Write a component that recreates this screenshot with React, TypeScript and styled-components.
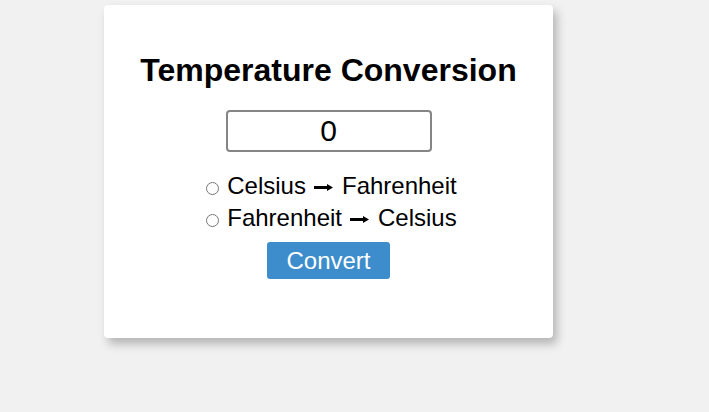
import { useState } from "react"
import styled, { createGlobalStyle } from "styled-components"

const GlobalStyle = createGlobalStyle`
  html, body {
    margin: 0;
    padding: 0;
    background: #f1f1f1;
    font-family: "Liberation Sans", Arial, sans-serif;
  }
`

const Styled = {
  Page: styled.div`
    width: 709px;
    height: 412px;
    padding: 5px 0 0 104px;
    box-sizing: border-box;
  `,
  Card: styled.div`
    width: 449px;
    height: 333px;
    box-sizing: border-box;
    padding: 47px 20px 0;
    background: #ffffff;
    border-radius: 4px;
    box-shadow: 4px 6px 10px rgba(0, 0, 0, 0.25);
    display: flex;
    flex-direction: column;
    align-items: center;
  `,
  Title: styled.h1`
    margin: 0;
    font-size: 32px;
    line-height: 37px;
    font-weight: 700;
    color: #000;
  `,
  Input: styled.input`
    margin-top: 21px;
    width: 206px;
    height: 42px;
    box-sizing: border-box;
    border: 2px solid #858585;
    border-radius: 4px;
    font-family: "Liberation Sans", Arial, sans-serif;
    font-size: 30px;
    text-align: center;
    color: #000;
    outline: none;
  `,
  Options: styled.div`
    margin-top: 18px;
    padding-left: 6px;
    display: flex;
    flex-direction: column;
    align-items: center;
  `,
  Option: styled.label`
    display: flex;
    align-items: center;
    gap: 8px;
    height: 32px;
    font-size: 24px;
    color: #000;
  `,
  Radio: styled.input`
    margin: 4px 0 0;
    width: 13px;
    height: 13px;
  `,
  Text: styled.span`
    display: inline-flex;
    align-items: center;
  `,
  Arrow: styled.svg`
    margin: 3px 9px 0 8px;
  `,
  Button: styled.button`
    margin-top: 8px;
    width: 123px;
    height: 37px;
    border: none;
    border-radius: 3px;
    background: #3d8ccb;
    color: #fff;
    font-family: "Liberation Sans", Arial, sans-serif;
    font-size: 24px;
    cursor: pointer;
  `,
}

const Arrow = () => (
  <Styled.Arrow width="19" height="7" viewBox="0 0 19 7">
    <rect x="0" y="2" width="14" height="3" fill="#000" />
    <path d="M13 0 L19 3.5 L13 7 Z" fill="#000" />
  </Styled.Arrow>
)

export default function App() {
  const [value, setValue] = useState("0")
  const [mode, setMode] = useState("")

  return (
    <>
      <GlobalStyle />
      <Styled.Page>
        <Styled.Card>
          <Styled.Title>Temperature Conversion</Styled.Title>
          <Styled.Input value={value} onChange={(e) => setValue(e.target.value)} />
          <Styled.Options>
            <Styled.Option>
              <Styled.Radio
                type="radio"
                name="mode"
                checked={mode === "cf"}
                onChange={() => setMode("cf")}
              />
              <Styled.Text>
                Celsius<Arrow />Fahrenheit
              </Styled.Text>
            </Styled.Option>
            <Styled.Option>
              <Styled.Radio
                type="radio"
                name="mode"
                checked={mode === "fc"}
                onChange={() => setMode("fc")}
              />
              <Styled.Text>
                Fahrenheit<Arrow />Celsius
              </Styled.Text>
            </Styled.Option>
          </Styled.Options>
          <Styled.Button>Convert</Styled.Button>
        </Styled.Card>
      </Styled.Page>
    </>
  )
}
